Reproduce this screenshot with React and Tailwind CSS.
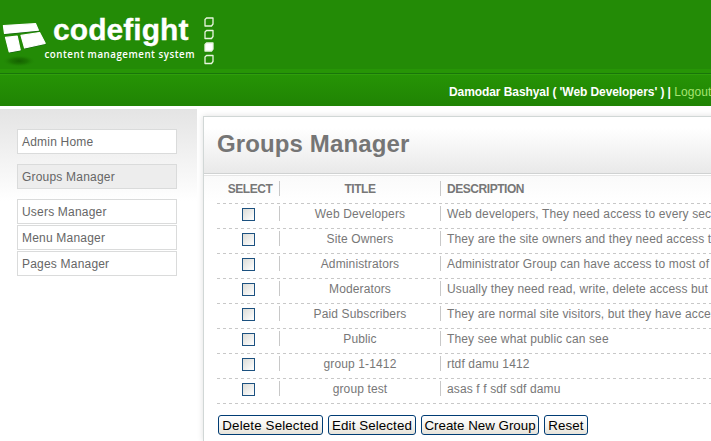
import React from 'react';

const groups = [
  ['Web Developers', 'Web developers, They need access to every section'],
  ['Site Owners', 'They are the site owners and they need access to all'],
  ['Administrators', 'Administrator Group can have access to most of the'],
  ['Moderators', 'Usually they need read, write, delete access but not'],
  ['Paid Subscribers', 'They are normal site visitors, but they have access'],
  ['Public', 'They see what public can see'],
  ['group 1-1412', 'rtdf damu 1412'],
  ['group test', 'asas f f sdf sdf damu'],
];

function Logo() {
  return (
    <svg width="230" height="69" viewBox="0 0 230 69" className="block">
      <defs>
        <radialGradient id="shade">
          <stop offset="0" stopColor="#146000" />
          <stop offset="0.5" stopColor="#186d00" stopOpacity="0.7" />
          <stop offset="1" stopColor="#238b06" stopOpacity="0" />
        </radialGradient>
      </defs>
      <ellipse cx="19" cy="61" rx="17" ry="6" fill="url(#shade)" />
      <g fill="#0f5c10" transform="translate(0.6 1)">
        <path d="M3.4 25.7 35.6 23.7 38.4 30.2 4.3 33.6Z" />
        <path d="M5.5 37.4 17.2 36.2 20.2 50 9.2 51.9Z" />
        <path d="M21 35.4 39.6 32.5 45.2 43.3 24.6 48Z" />
      </g>
      <g fill="#fff" stroke="#fff" strokeWidth="1.2" strokeLinejoin="round">
        <path d="M3.4 25.5 35.6 23.7 38.4 30.2 4.5 33.4Z" />
        <path d="M5.5 37.4 17.2 36.2 20.2 50 9.2 51.9Z" />
        <path d="M21 35.4 39.6 32.5 45.2 43.3 24.6 48Z" />
      </g>
      <text x="53" y="40" textLength="135.5" fill="#fff" stroke="#fff" strokeWidth="0.3" fontSize="30" fontWeight="700" fontFamily="Liberation Sans, Arial, sans-serif">codefight</text>
      <text x="44.5" y="58" textLength="150.5" fill="#fff" fontSize="11.5" fontWeight="600" letterSpacing="0.6" fontFamily="Open Sans, Noto Sans, sans-serif" lengthAdjust="spacingAndGlyphs">content management system</text>
      <g fill="none" stroke="#e8f5df" strokeWidth="1.3" strokeLinejoin="round">
        <path d="M206.5 18H213v6l-1.5 2H205v-6.5z" />
        <path d="M206.5 30.5H213v6l-1.5 2H205v-6.5z" />
        <path d="M206.5 43H213v6l-1.5 2H205v-6.5z" fill="#fff" />
        <path d="M206.5 55.5H213v6l-1.5 2H205v-6.5z" />
      </g>
    </svg>
  );
}

function NavItem({ children, active, className = '' }) {
  return (
    <a className={`block h-[25px] w-40 border border-[#dadbdb] pl-1 text-[12px] leading-[24px] tracking-[0.2px] text-[#666] ${active ? 'bg-[#ededed]' : 'bg-white'} ${className}`}>
      {children}
    </a>
  );
}

function Row({ select, title, description, head }) {
  return (
    <div className={`flex w-[600px] flex-col ${head ? 'h-7 pt-[5px] font-bold' : 'h-[25px] pt-0.5'}`}>
      <div className={`flex h-[15px] text-[12px] leading-[17px] text-[#777] ${head ? 'tracking-[-0.45px]' : 'tracking-[0.13px]'}`}>
        <div className={`flex w-[62px] shrink-0 items-start justify-center ${head ? 'pl-1' : 'pl-px'}`}>{select}</div>
        <div className="w-[161px] shrink-0 border-l border-[#c8c8c8] text-center">{title}</div>
        <div className="border-l border-[#c8c8c8] pl-1.5 whitespace-nowrap">{description}</div>
      </div>
      <div className="mt-auto h-px bg-[repeating-linear-gradient(90deg,#c8c8c8_0_3px,transparent_3px_6px)]" />
    </div>
  );
}

function Button({ children, className }) {
  return (
    <button className={`h-5 shrink-0 rounded-[3px] border border-[#003c74] bg-linear-to-b from-white via-[#f6f5f1] to-[#e6e3da] text-[13.33px] leading-[19px] whitespace-nowrap text-black ${className}`}>
      {children}
    </button>
  );
}

export default function App() {
  return (
    <div className="h-[441px] w-[711px] overflow-hidden bg-white font-['Liberation_Sans',Arial,sans-serif]">
      <header className="h-[106px] bg-[#238b06]">
        <div className="h-[69px]"><Logo /></div>
        <div className="h-1 bg-[#279506]" />
        <div className="h-px bg-[#19750a]" />
        <div className="h-px bg-[#309e0c]" />
        <div className="flex h-[31px] bg-linear-to-b from-[#269305] to-[#208404] pt-[9px] pl-[449px] text-[12px] leading-4 font-bold tracking-[-0.08px] whitespace-nowrap text-white">
          <span>Damodar Bashyal ( 'Web Developers' ) |&nbsp;</span>
          <span className="font-normal tracking-[0.1px] text-[#a6e471]">Logout</span>
        </div>
      </header>
      <div className="flex h-[335px]">
        <aside className="mt-[3px] w-[197px] shrink-0 bg-linear-to-b from-[#e4e4e4] to-white to-[92px] pt-5 pl-[17px]">
          <NavItem>Admin Home</NavItem>
          <NavItem active className="mt-2.5">Groups Manager</NavItem>
          <NavItem className="mt-2.5">Users Manager</NavItem>
          <NavItem className="mt-px">Menu Manager</NavItem>
          <NavItem className="mt-px">Pages Manager</NavItem>
        </aside>
        <main className="mt-2.5 ml-1.5 w-[620px] shrink-0 border-t border-l border-[#d1d7d6] bg-white shadow-[0_0_6px_rgba(0,0,0,0.13)]">
          <h1 className="h-[56px] bg-linear-to-b from-white from-20% to-[#e9e9e9] pl-[13px] text-[24px] leading-[54px] font-bold tracking-[0.12px] text-[#757575]">Groups Manager</h1>
          <div className="h-0.5 border-t border-[#d0d2d2]" />
          <div className="h-px bg-[#e6e6e6]" />
          <section className="bg-linear-to-b from-[#fafafa] to-white to-[26px] pl-[13px]">
            <Row head select="SELECT" title="TITLE" description="DESCRIPTION" />
            {groups.map(([title, description]) => (
              <Row
                key={title}
                select={<span className="mt-0.5 block size-[13px] border border-[#1c5180] bg-linear-to-br from-[#dcdcd7] to-white" />}
                title={title}
                description={description}
              />
            ))}
            <div className="flex gap-[5px] pt-[11px] pl-px">
              <Button className="w-[105px] tracking-[0.15px]">Delete Selected</Button>
              <Button className="w-[88px] tracking-[0.1px]">Edit Selected</Button>
              <Button className="w-[118px]">Create New Group</Button>
              <Button className="w-11 tracking-[0.1px]">Reset</Button>
            </div>
          </section>
        </main>
      </div>
    </div>
  );
}
